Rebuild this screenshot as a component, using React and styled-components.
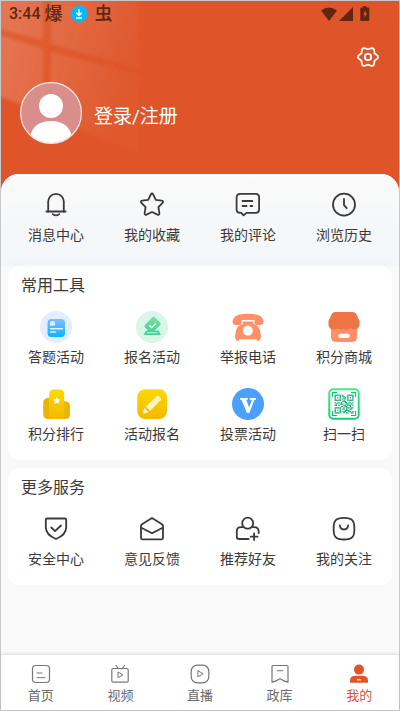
import React from "react";
import styled, { createGlobalStyle } from "styled-components";

const GlobalStyle = createGlobalStyle`
  :root {
    --primary: #df5529;
    --text: #3a3a3a;
    --muted: #6a6a6a;
    --background: #f9f9f9;
    --status: #602610;
  }

  * {
    box-sizing: border-box;
  }

  body {
    margin: 0;
    font-family: Roboto, "Noto Sans CJK SC", sans-serif;
    color: var(--text);
  }
`;

const gearPath = () => {
  const points = [];
  for (let deg = 0; deg < 360; deg += 6) {
    const angle = (deg * Math.PI) / 180;
    const r = 8.8 + 1.2 * Math.cos(6 * angle);
    points.push(
      `${(12 + r * Math.cos(angle)).toFixed(2)} ${(12 + r * Math.sin(angle)).toFixed(2)}`
    );
  }
  return `M${points.join("L")}Z`;
};

const LineIcon = ({ children }) => (
  <svg
    width="32"
    height="32"
    viewBox="0 0 32 32"
    fill="none"
    stroke="#3a3a3a"
    strokeWidth="1.8"
    strokeLinecap="round"
    strokeLinejoin="round"
    aria-hidden="true"
  >
    {children}
  </svg>
);

const ColorIcon = ({ children }) => (
  <svg width="32" height="32" viewBox="0 0 32 32" aria-hidden="true">
    {children}
  </svg>
);

const BellIcon = () => (
  <LineIcon>
    <path d="M8.2 22.5V12.600a7.800 7.800 0 0 1 15.600 0v9.900" />
    <path d="M6.400 22.500h19.200M12.800 25.200c1.400 1.500 5 1.500 6.400 0" />
  </LineIcon>
);

const StarIcon = () => (
  <LineIcon>
    <path d="M14.800 5.500q1.200-2 2.400 0l2.600 5.300 6 .9q2.200.5.8 2.200l-4.200 4.300 1 6q.1 2.200-1.900 1.400L16 23l-5.500 2.600q-2 .8-1.900-1.400l1-6-4.200-4.300q-1.400-1.700.8-2.200l6-.9z" />
  </LineIcon>
);

const CommentIcon = () => (
  <LineIcon>
    <path d="M8.300 4.900h15.200q3.600 0 3.600 3.600v11.800q0 3.600-3.600 3.600h-9l-2.900 2.500-2.400-2.500h-1q-3.600 0-3.600-3.600V8.500q0-3.600 3.700-3.600z" />
    <path d="M10.500 12h9.800M10.500 17h4M18.500 17h1.800" />
  </LineIcon>
);

const HistoryIcon = () => (
  <LineIcon>
    <circle cx="16" cy="15.700" r="11" />
    <path d="M16 10v6.200l2.700 3" />
  </LineIcon>
);

const QuizIcon = () => (
  <ColorIcon>
    <defs>
      <linearGradient id="quiz" x1="0" y1="0" x2="0" y2="1">
        <stop offset="0" stopColor="#80bdff" />
        <stop offset="1" stopColor="#08b6ff" />
      </linearGradient>
    </defs>
    <circle cx="16" cy="16" r="16" fill="#e2eeff" />
    <rect x="7.500" y="8" width="17.500" height="18" rx="4" fill="url(#quiz)" />
    <rect x="10" y="10.200" width="5" height="4.500" rx="1" fill="#dceeff" />
    <path d="M10.500 17.800h12M10.500 21h5" stroke="#dff1ff" strokeWidth="1.400" strokeLinecap="round" />
  </ColorIcon>
);

const SignIcon = () => (
  <ColorIcon>
    <defs>
      <linearGradient id="sign" x1="0" y1="0" x2="0" y2="1">
        <stop offset="0" stopColor="#7fe29e" />
        <stop offset="1" stopColor="#43d39c" />
      </linearGradient>
    </defs>
    <circle cx="16" cy="16" r="16" fill="#daf6e9" />
    <path d="M10 19.500h12.500l2.500 4.500H7.500z" fill="#49d29c" />
    <path d="M11 21.700h10.500" stroke="#b8f0d8" />
    <path d="M16.500 6q1-.9 2 0l5.800 5.800q.9 1 0 2l-6 6.200h-5.800l-3.600-3.700q-.9-1 0-2z" fill="url(#sign)" />
    <path d="m13.200 14.300 2.500 2.400 4-4.200" fill="none" stroke="#fff" strokeWidth="1.300" />
  </ColorIcon>
);

const PhoneIcon = () => (
  <ColorIcon>
    <path d="M9.500 13.200h13l3.500 2.300q3 4 3 11.500l-1 1q.300 2-1.600 2t-1.600-1.700H7.200q0 1.700-1.600 1.700T4 28l-1-1q0-7.500 3-11.500z" fill="#ff8f69" />
    <path d="M7 3.800q9-2 18 0 6 1.700 6.500 6.700 0 3.500-3.500 3.500h-3.500q-2 0-2-2V9H9.500v3q0 2-2 2H4q-3.500 0-3.500-3.500Q1 5.500 7 3.800z" fill="#ff8f69" />
    <path d="M10.800 10.500h10.400v3H10.800z" fill="#ff8f69" />
    <circle cx="15.800" cy="19.800" r="5" fill="#fff" />
  </ColorIcon>
);

const ShopIcon = () => (
  <ColorIcon>
    <path d="M3 14h26v12q0 5-5 5H8q-5 0-5-5z" fill="#ff8f69" />
    <path d="M7 1h18q2.500 0 3.500 2.500L31.500 10v4q-.700 4-4.300 4.500-2.500.500-4.700-1.500-2.800 3-6.500.500-3.700 2.500-6.500-.500-2.200 2-4.700 1.500Q1.200 18 .5 14v-4l3-6.500Q4.500 1 7 1z" fill="#ee7445" />
    <rect x="10.500" y="22.700" width="11" height="4.300" rx="1.500" fill="#fff" />
  </ColorIcon>
);

const RankIcon = () => (
  <ColorIcon>
    <defs>
      <linearGradient id="rank" x1="0" y1="0" x2="0" y2="1">
        <stop offset="0" stopColor="#fadb00" />
        <stop offset="1" stopColor="#f7b700" />
      </linearGradient>
    </defs>
    <path d="M9.500 9.500Q3.200 10 3.200 15v11q0 5 5 5h1.800z" fill="#eab306" />
    <path d="M24 13.300q6 .2 6 4.700v8.500q0 4.500-5 4.500h-2z" fill="#eab306" />
    <path d="M9.200 31V6.500q0-5 5-5h5q5 0 5 5V31z" fill="url(#rank)" />
    <path d="m16.700 9.800.9 1.800 2 .300-1.500 1.400.4 2-1.800-1-1.800 1 .4-2-1.500-1.400 2-.300z" fill="#fff" stroke="#fff" strokeLinejoin="round" />
  </ColorIcon>
);

const PencilIcon = () => (
  <ColorIcon>
    <rect x="1.200" y="1.200" width="29.800" height="29.800" rx="8" fill="url(#rank)" />
    <path d="m10 18.500 10.500-10.300q1.200-1 2.400 0l1.700 1.700q1 1.200 0 2.400L14.200 22.700z" fill="#fff4c4" />
    <path d="m8.500 20 4.200 4.200-4.300 1.300q-1.900.300-1.500-1.500z" fill="#fff4c4" />
  </ColorIcon>
);

const VoteIcon = () => (
  <ColorIcon>
    <circle cx="16" cy="16" r="16" fill="#4a9fff" />
    <path d="M8 10h8v1.400l-1.800.400 3 7.700 2.600-7.400-2.100-.700V10H24v1.400l-1.600.600L17.300 25h-2.400L9.600 11.900 8 11.400z" fill="#fff" />
  </ColorIcon>
);

const qrRows = [
  "111110100011111",
  "100010110010001",
  "101010011010101",
  "100010101010001",
  "111110010011111",
  "000000111000000",
  "101101001101101",
  "010011100110010",
  "110100011011101",
  "000001101100100",
  "111110010111011",
  "100010110100110",
  "101010001111000",
  "100010111001101",
  "111110010110011",
];

const ScanIcon = () => (
  <ColorIcon>
    <defs>
      <linearGradient id="scan" x1="0" y1="0" x2="0" y2="1">
        <stop offset="0" stopColor="#43eb81" />
        <stop offset="1" stopColor="#09d46f" />
      </linearGradient>
    </defs>
    <rect x="1.300" y="1.300" width="29.400" height="29.400" rx="4" fill="#fff" stroke="url(#scan)" strokeWidth="2" />
    <path d="M4.500 9V4.500H9M23 4.500h4.500V9M4.500 23v4.500H9M23 27.500h4.500V23" fill="none" stroke="#14bd79" strokeWidth="1.200" />
    <g fill="#12a876">
      {qrRows.map((row, y) =>
        row.split("").map((cell, x) =>
          cell === "1" ? (
            <rect key={`${x}-${y}`} x={6.6 + x * 1.26} y={6.6 + y * 1.26} width="1.300" height="1.300" />
          ) : null
        )
      )}
    </g>
  </ColorIcon>
);

const ShieldIcon = () => (
  <LineIcon>
    <path d="M7 5.500h18q1.200 0 1.200 1.200V14q0 8-10.200 12Q5.800 22 5.800 14V6.700q0-1.200 1.200-1.200z" />
    <path d="m11.300 14.500 3.700 3.700 6-5.700" />
  </LineIcon>
);

const MailIcon = () => (
  <LineIcon>
    <path d="M16 4.900 26 11.200q1 .600 1 1.600v12.300q0 1.200-1.200 1.200H6.200Q5 26.300 5 25.100V12.800q0-1 1-1.600z" />
    <path d="m5.300 14.800 10.700 5.400 10.700-5.400" />
  </LineIcon>
);

const FriendIcon = () => (
  <LineIcon>
    <circle cx="15.700" cy="10.200" r="5.500" />
    <path d="M10.500 14.200H9q-4.200 0-4.200 4.200v5.300q0 2.300 2.300 2.300h9.500M21 14.200h1q4.700 0 4.700 4.500v1.300" />
    <path d="M18.700 23.700h6.800M22.100 20.300v6.800" />
  </LineIcon>
);

const FollowIcon = () => (
  <LineIcon>
    <path d="M16 4.900c8 0 10.400 2.500 10.400 10.800S24.400 26.500 16 26.500 5.600 24 5.600 15.700 8 4.900 16 4.900z" />
    <path d="M11.800 12.500c1 5.300 7.400 5.300 8.400 0" />
  </LineIcon>
);

const TabIcon = ({ children }) => (
  <svg
    width="20"
    height="20"
    viewBox="0 0 20 20"
    fill="none"
    stroke="#777"
    strokeWidth="1.200"
    strokeLinecap="round"
    strokeLinejoin="round"
    aria-hidden="true"
  >
    {children}
  </svg>
);

const HomeIcon = () => (
  <TabIcon>
    <rect x="1.500" y="1.500" width="17" height="17" rx="3.500" />
    <path d="M6 9h5M6 13.700h8" strokeWidth="1" />
  </TabIcon>
);

const VideoIcon = () => (
  <TabIcon>
    <rect x="1.800" y="4.500" width="16.400" height="13.700" rx="1.500" />
    <path d="m6 1.500 2.300 3M14.500 1.500l-2.300 3" />
    <path d="M8 8.400v5.400l4.600-2.700z" strokeWidth="1" />
  </TabIcon>
);

const LiveIcon = () => (
  <TabIcon>
    <rect x="1.200" y="1.200" width="17.600" height="17.600" rx="6" />
    <path d="M7.900 7.100v5.800l4.900-2.900z" strokeWidth="1" />
  </TabIcon>
);

const LibraryIcon = () => (
  <TabIcon>
    <path d="M3 1.500h14q1 0 1 1v15.700Q14 17.500 10 14.800 6 17.500 2 18.200V2.500q0-1 1-1z" />
    <path d="M7.200 6.700h5.600" strokeWidth="1" />
  </TabIcon>
);

const MineIcon = () => (
  <svg width="20" height="20" viewBox="0 0 20 20" fill="#df5529" aria-hidden="true">
    <circle cx="10" cy="5.600" r="5" />
    <path d="M6.500 11.700h7q5.500 0 5.500 5v2H1v-2q0-5 5.500-5z" />
    <path d="M8 15.800h4" stroke="#fff" strokeWidth="1.200" />
  </svg>
);

const quickLinks = [
  { label: "消息中心", icon: <BellIcon /> },
  { label: "我的收藏", icon: <StarIcon /> },
  { label: "我的评论", icon: <CommentIcon /> },
  { label: "浏览历史", icon: <HistoryIcon /> },
];

const tools = [
  { label: "答题活动", icon: <QuizIcon /> },
  { label: "报名活动", icon: <SignIcon /> },
  { label: "举报电话", icon: <PhoneIcon /> },
  { label: "积分商城", icon: <ShopIcon /> },
  { label: "积分排行", icon: <RankIcon /> },
  { label: "活动报名", icon: <PencilIcon /> },
  { label: "投票活动", icon: <VoteIcon /> },
  { label: "扫一扫", icon: <ScanIcon /> },
];

const services = [
  { label: "安全中心", icon: <ShieldIcon /> },
  { label: "意见反馈", icon: <MailIcon /> },
  { label: "推荐好友", icon: <FriendIcon /> },
  { label: "我的关注", icon: <FollowIcon /> },
];

const tabs = [
  { label: "首页", icon: <HomeIcon /> },
  { label: "视频", icon: <VideoIcon /> },
  { label: "直播", icon: <LiveIcon /> },
  { label: "政库", icon: <LibraryIcon /> },
  { label: "我的", icon: <MineIcon />, active: true },
];

const Menu = ({ items }) => (
  <Grid>
    {items.map(({ label, icon }) => (
      <MenuButton type="button" key={label}>
        {icon}
        <span>{label}</span>
      </MenuButton>
    ))}
  </Grid>
);

const App = () => {
  return (
    <Page>
      <GlobalStyle />
      <Header>
        <Glare viewBox="0 0 160 170" aria-hidden="true">
          <defs>
            <linearGradient id="glare" gradientUnits="userSpaceOnUse" x1="0" y1="40" x2="140" y2="80">
              <stop offset="0" stopColor="#fff" stopOpacity="0.140" />
              <stop offset="0.500" stopColor="#fff" stopOpacity="0.080" />
              <stop offset="1" stopColor="#fff" stopOpacity="0.015" />
            </linearGradient>
            <linearGradient id="haze" gradientUnits="userSpaceOnUse" x1="0" y1="20" x2="120" y2="60">
              <stop offset="0" stopColor="#fff" stopOpacity="0.060" />
              <stop offset="1" stopColor="#fff" stopOpacity="0" />
            </linearGradient>
            <filter id="soft">
              <feGaussianBlur stdDeviation="1.800" />
            </filter>
          </defs>
          <path d="M-5-5h143v158L-5 94z" fill="url(#haze)" filter="url(#soft)" />
          <g fill="url(#glare)" filter="url(#soft)">
            <path d="M-5-5h47v44L-5 27z" />
            <path d="M50-5h88v72L50 43z" />
            <path d="M-5 33l47 15v62L-5 94z" />
            <path d="M50 51l88 23v79L50 115z" />
          </g>
        </Glare>
        <StatusBar>
          <time>3:44</time>
          <b>爆</b>
          <svg width="18" height="18" viewBox="0 0 18 18" aria-hidden="true">
            <circle cx="9" cy="9" r="8.500" fill="#08b8ff" />
            <path d="M9 4v6M6.300 7.800 9 10.500l2.700-2.700M6 13h6" fill="none" stroke="#fff" strokeWidth="1.500" />
          </svg>
          <b>虫</b>
          <Signals width="50" height="16" viewBox="0 0 50 16" aria-hidden="true">
            <path d="M1 4.500Q9 -1.500 17 4.500L9 15z" />
            <path d="M33 1v14H19z" />
            <path d="M43.300 0h3v1.400h2q1 0 1 1V14q0 1-1 1h-7q-1 0-1-1V2.400q0-1 1-1h2z" />
            <path d="m45.600 4-2.500 4.500h1.500V12l2.500-4.700h-1.500z" fill="#df5529" />
          </Signals>
        </StatusBar>
        <Toolbar>
          <SettingsButton type="button" aria-label="设置">
            <svg width="24" height="24" viewBox="0 0 24 24" fill="none" stroke="#fff" strokeWidth="1.800">
              <path d={gearPath()} />
              <circle cx="12" cy="12" r="3.200" />
            </svg>
          </SettingsButton>
        </Toolbar>
        <Profile href="#login">
          <svg width="62" height="62" viewBox="0 0 62 62" aria-hidden="true">
            <defs>
              <clipPath id="avatar">
                <circle cx="31" cy="31" r="30" />
              </clipPath>
            </defs>
            <circle cx="31" cy="31" r="30.400" fill="#d98e8c" />
            <g fill="#fff" clipPath="url(#avatar)">
              <circle cx="31" cy="24" r="12" />
              <path d="M9 62q1-23 22-23t22 23z" />
            </g>
            <circle cx="31" cy="31" r="30.400" fill="none" stroke="#f4e7e5" strokeWidth="1.200" />
          </svg>
          <span>登录/注册</span>
        </Profile>
      </Header>
      <Panel>
        <Quick>
          <Menu items={quickLinks} />
        </Quick>
        <Cards>
          <Card>
            <h2>常用工具</h2>
            <Menu items={tools} />
          </Card>
          <Card>
            <h2>更多服务</h2>
            <Menu items={services} />
          </Card>
        </Cards>
      </Panel>
      <TabBar>
        {tabs.map(({ label, icon, active }) => (
          <Tab href="#" key={label} $active={active}>
            {icon}
            {label}
          </Tab>
        ))}
      </TabBar>
    </Page>
  );
};

const Page = styled.div`
  display: flex;
  flex-direction: column;
  min-height: 100vh;
  border: 1px solid #c8c8c8;
  background: var(--background);
`;

const Header = styled.header`
  position: relative;
  display: flex;
  flex-direction: column;
  padding-bottom: 50px;
  background: var(--primary);
  overflow: hidden;
`;

const Glare = styled.svg`
  position: absolute;
  top: 0;
  left: 0;
  width: 160px;
  height: 170px;
`;

const StatusBar = styled.div`
  position: relative;
  display: flex;
  align-items: center;
  height: 25px;
  padding: 0 29px 0 8px;
  color: var(--status);
  font-size: 16px;
  line-height: 24px;

  time {
    margin-right: 4px;
    font-weight: 500;
  }

  b {
    margin-right: 7px;
    font-size: 18px;
    font-weight: 500;
  }

  svg {
    margin-right: 7px;
  }
`;

const Signals = styled.svg`
  fill: var(--status);

  && {
    margin: 0 0 0 auto;
  }
`;

const Toolbar = styled.div`
  position: relative;
  display: flex;
  justify-content: flex-end;
  padding: 19px 19px 13px;
`;

const SettingsButton = styled.button`
  padding: 0;
  border: none;
  background: none;
  cursor: pointer;

  svg {
    display: block;
  }
`;

const Profile = styled.a`
  position: relative;
  display: flex;
  align-self: flex-start;
  align-items: center;
  gap: 12px;
  margin-left: 19px;
  color: #fff;
  font-size: 19px;
  line-height: 24px;
  text-decoration: none;

  span {
    padding-top: 8px;
  }
`;

const Panel = styled.main`
  position: relative;
  flex: 1;
  margin-top: -20px;
  border-radius: 18px 18px 0 0;
  background: var(--background);
  overflow: hidden;
`;

const Quick = styled.section`
  padding: 15px 7px 21px;
  background: linear-gradient(#fafafa, #f3f5f8);
`;

const Cards = styled.div`
  display: flex;
  flex-direction: column;
  gap: 8px;
  padding: 0 7px 16px;
`;

const Card = styled.section`
  padding: 8px 0 16px;
  border-radius: 12px;
  background: #fff;

  h2 {
    margin: 0 13px 13px;
    font-size: 16px;
    font-weight: 400;
    line-height: 24px;
  }
`;

const Grid = styled.div`
  display: grid;
  grid-template-columns: repeat(4, 1fr);
  row-gap: 21px;
`;

const MenuButton = styled.button`
  display: flex;
  flex-direction: column;
  align-items: center;
  gap: 4px;
  padding: 0;
  border: none;
  background: none;
  color: inherit;
  font: inherit;
  font-size: 14px;
  line-height: 20px;
  cursor: pointer;
`;

const TabBar = styled.nav`
  position: sticky;
  bottom: 0;
  display: grid;
  grid-template-columns: repeat(5, 1fr);
  padding: 9px 0 4px;
  background: #fff;
  box-shadow: 0 -1px 3px rgba(0, 0, 0, 0.12);
`;

const Tab = styled.a`
  display: flex;
  flex-direction: column;
  align-items: center;
  gap: 2px;
  color: ${({ $active }) => ($active ? "var(--primary)" : "var(--muted)")};
  font-size: 13px;
  line-height: 20px;
  text-decoration: none;
`;

export default App;
